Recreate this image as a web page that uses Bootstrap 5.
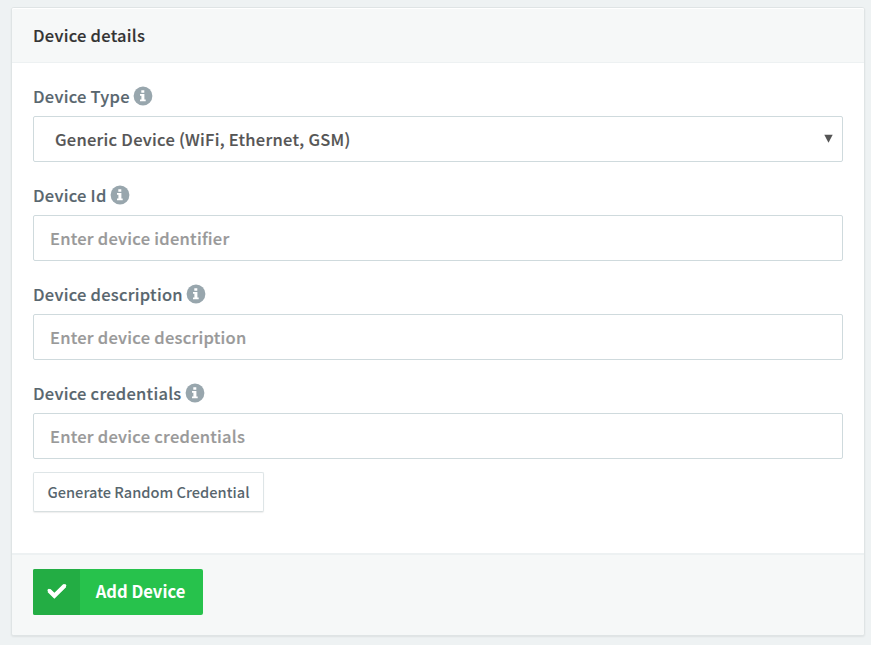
<!DOCTYPE html>
<html lang="en">
<head>
<meta charset="utf-8">
<meta name="viewport" content="width=device-width, initial-scale=1">
<title>Device details</title>
<link href="https://cdn.jsdelivr.net/npm/bootstrap@5.3.0/dist/css/bootstrap.min.css" rel="stylesheet">
<style>
body{background:#eef2f3;font-family:"Noto Sans CJK SC","Open Sans",sans-serif;font-size:16.5px;letter-spacing:.26px;font-weight:500;color:#58666e;padding:7px 6px 8px 11px;-webkit-text-stroke:.15px}
.device-card{--bs-card-border-color:#dfe4e5;--bs-card-border-radius:3px;--bs-card-inner-border-radius:2px;--bs-card-cap-bg:#f6f8f8;height:629px;box-shadow:0 1px 2px rgba(0,0,0,.07)}
.device-card .card-header{height:55px;padding:0 21px;border-bottom:1px solid #edf1f2;color:#333;box-shadow:inset 0 1px #fff}
.device-card .card-body{padding:19px 21px 0}
.device-card .card-footer{height:82px;padding:14px 21px 0;border-top:2px solid #edf1f2}
.field{height:99px}
.field .form-label{height:28px;line-height:28px;margin:0 0 6px;gap:3px}
.field .form-control,.field .form-select{height:46px;border:1px solid #cfdadd;border-radius:2px;font-size:inherit;letter-spacing:inherit;font-weight:500;line-height:24px;padding:0 16px}
.field .form-control::placeholder{color:#999;opacity:1;-webkit-text-stroke:.2px}
.field .form-select{color:#555;padding-left:21px;background-image:none}
.caret{position:absolute;right:10px;top:18px}
.btn-generate{display:block;width:231px;height:40px;margin-top:-6px;padding:0 0 1px;border:1px solid #dee5e7;border-bottom-color:#d8dfe0;border-radius:2px;background:#fff;color:#58666e;font-size:14.64px;letter-spacing:0;font-weight:500;-webkit-text-stroke:0;box-shadow:0 1px 1px rgba(90,90,90,.1)}
.btn-add{width:170px;height:46px;padding:0;border:0;border-radius:2px;background:#27c24c;color:#fff;font-size:16.6px;letter-spacing:0;font-weight:600;overflow:hidden;-webkit-text-stroke:0}
.btn-add:hover{background:#27c24c;color:#fff}
.btn-add .tick{width:47px;background:#23ad44}
.btn-add .caption-text{padding:0 2px 1px 0}
</style>
</head>
<body>
<svg class="d-none"><symbol id="info" viewBox="0 0 20 20"><circle cx="10" cy="10" r="9.4" fill="#98a6ad"/><path fill="#fff" d="M8.3 4.3h3v2.4h-3zM7 8.1h4.4v5.4h1.3v1.8H7v-1.8h1.4V9.8H7z"/></symbol></svg>
<main class="card device-card">
  <div class="card-header d-flex align-items-center"><span class="heading">Device details</span></div>
  <form class="card-body">
    <div class="field">
      <label class="form-label d-flex align-items-center" for="type"><span>Device Type</span><svg width="20" height="20"><use href="#info"/></svg></label>
      <div class="position-relative">
        <select class="form-select" id="type"><option>Generic Device (WiFi, Ethernet, GSM)</option></select>
        <svg class="caret" width="9" height="9" viewBox="0 0 9 9"><path d="M.3.7h8.4L4.5 8.8z" fill="#555"/></svg>
      </div>
    </div>
    <div class="field">
      <label class="form-label d-flex align-items-center" for="ident"><span>Device Id</span><svg width="20" height="20"><use href="#info"/></svg></label>
      <input class="form-control" id="ident" placeholder="Enter device identifier">
    </div>
    <div class="field">
      <label class="form-label d-flex align-items-center" for="desc"><span>Device description</span><svg width="20" height="20"><use href="#info"/></svg></label>
      <input class="form-control" id="desc" placeholder="Enter device description">
    </div>
    <div class="field">
      <label class="form-label d-flex align-items-center" for="cred"><span>Device credentials</span><svg width="20" height="20"><use href="#info"/></svg></label>
      <input class="form-control" id="cred" placeholder="Enter device credentials">
    </div>
    <button class="btn btn-generate" type="button">Generate Random Credential</button>
  </form>
  <div class="card-footer">
    <button class="btn btn-add d-flex align-items-stretch" type="button">
      <span class="tick d-flex align-items-center justify-content-center"><svg width="22" height="18" viewBox="0 0 22 18"><path d="M3 7.4l5.4 5.4L18.8 2.6" fill="none" stroke="#fff" stroke-width="4.2"/><path d="M3 7.4l5.4 5.4L18.8 2.6" fill="none" stroke="#fff" stroke-width="3" stroke-linecap="round"/></svg></span>
      <span class="caption-text flex-grow-1 d-flex align-items-center justify-content-center">Add Device</span>
    </button>
  </div>
</main>
<script src="https://cdn.jsdelivr.net/npm/bootstrap@5.3.0/dist/js/bootstrap.bundle.min.js"></script>
</body>
</html>
